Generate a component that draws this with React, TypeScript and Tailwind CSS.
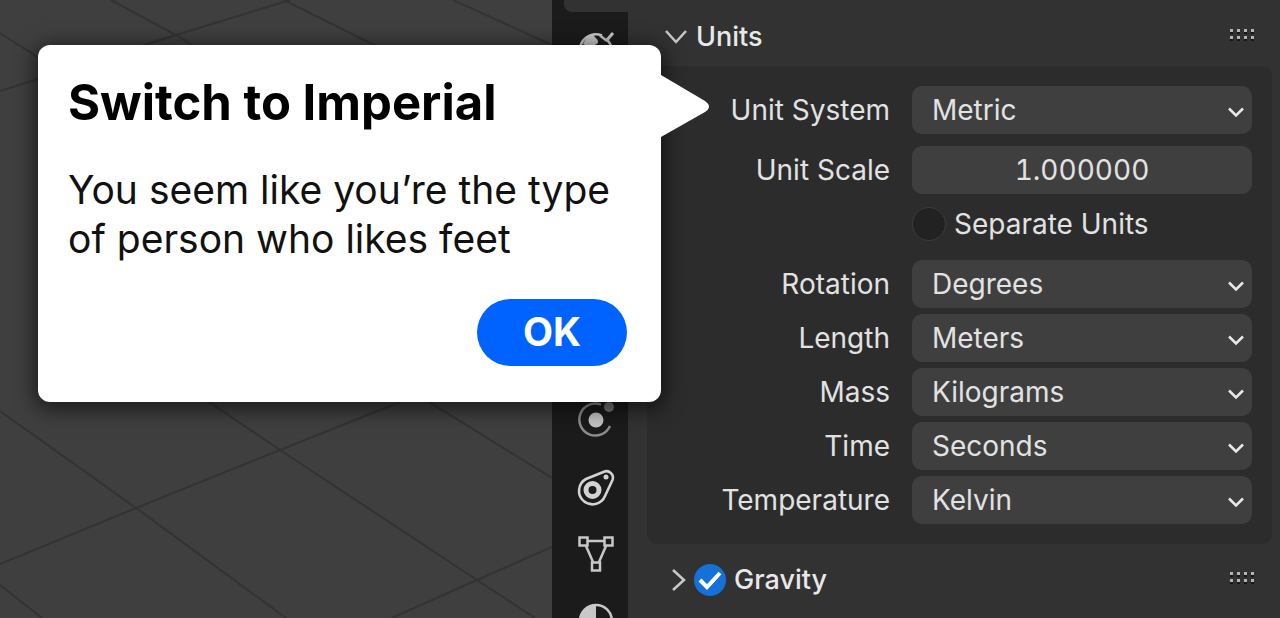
import { useState, type ReactNode } from "react";

function Grip() {
  return (
    <svg className="mb-1 h-3 w-6 shrink-0" viewBox="0 0 24 12" aria-hidden="true">
      {[0, 7, 14, 21].map((x) =>
        [0, 7].map((y) => (
          <g key={`${x}-${y}`}>
            <rect x={x} y={y + 2} width="3" height="3" fill="#161616" />
            <rect x={x} y={y} width="3" height="3" fill="#b4b4b4" />
          </g>
        )),
      )}
    </svg>
  );
}

function ViewportGrid() {
  return (
    <svg
      className="h-full w-full"
      viewBox="0 0 552 618"
      preserveAspectRatio="xMinYMin slice"
      fill="none"
      stroke="#333333"
      strokeWidth="2"
      aria-hidden="true"
    >
      <path d="M0 33L60 71M111 0L176 35L200 50M284 0L390 53M453 0L552 45M0 91L176 35L290 0" />
      <path d="M0 411L136 508L286 618M209 402L280 450L477 580L535 618M429 402L552 478" />
      <path d="M400 402L280 450L136 508L0 564M392 618L477 580L552 547M0 585L42 618" />
    </svg>
  );
}

function WorldIcon() {
  return (
    <svg className="size-10" viewBox="0 0 40 40" fill="none" aria-hidden="true">
      <path d="M4 26A16 16 0 0 1 26 9.500M30 13A16 16 0 0 1 36 26" stroke="#c8c8c8" strokeWidth="2.500" />
      <path d="M24 9.500L31 15" stroke="#c8c8c8" strokeWidth="2.500" />
      <path d="M31 14l6-7" stroke="#c8c8c8" strokeWidth="3" />
      <path d="M7 18C10 12 14 9 18 9c0 3 4 3 4 7 0 3-5 2-6 6-3 0-5-2-9-4z" fill="#c8c8c8" />
    </svg>
  );
}

function PhysicsIcon() {
  return (
    <svg className="size-10" viewBox="0 0 40 40" fill="none" aria-hidden="true">
      <path d="M25 3.600A16 16 0 1 0 34 25" stroke="#8c8c8c" strokeWidth="2.500" />
      <circle cx="20" cy="19" r="7.500" fill="#c4c4c4" />
      <circle cx="33" cy="6" r="5" fill="#777777" />
    </svg>
  );
}

function ConstraintIcon() {
  return (
    <svg className="size-10" viewBox="0 0 40 40" fill="none" stroke="#d2d2d2" aria-hidden="true">
      <path
        d="M10 11L28 3.700A6.500 6.500 0 0 1 36.500 12L29 28A13.500 13.500 0 1 1 10 11z"
        strokeWidth="2.600"
        strokeLinejoin="round"
      />
      <circle cx="16.500" cy="22" r="6.500" strokeWidth="5" />
      <circle cx="30" cy="9" r="2.500" fill="#d2d2d2" stroke="none" />
    </svg>
  );
}

function DataIcon() {
  return (
    <svg className="size-10" viewBox="0 0 40 40" fill="none" stroke="#c8c8c8" strokeWidth="2.500" aria-hidden="true">
      <path d="M12 6H28M10 11L17 27M30 11L23 27" />
      <rect x="3.500" y="2.500" width="8" height="8" />
      <rect x="28.500" y="2.500" width="8" height="8" />
      <rect x="16" y="27.500" width="8" height="8" />
    </svg>
  );
}

function MaterialIcon() {
  return (
    <svg className="size-10" viewBox="0 0 40 40" fill="none" aria-hidden="true">
      <circle cx="20" cy="19" r="16" stroke="#c8c8c8" strokeWidth="2.500" />
      <path d="M20 3a16 16 0 0 0 0 32z" fill="#c8c8c8" />
    </svg>
  );
}

function Tab({ label, children }: { label: string; children: ReactNode }) {
  return (
    <button type="button" aria-label={label} className="flex h-[67px] w-full shrink-0 items-center justify-center pl-3">
      {children}
    </button>
  );
}

const rowClass = "grid h-12 grid-cols-[243fr_340fr] items-center gap-x-[22px]";
const fieldClass =
  "h-12 w-full appearance-none rounded-[10px] bg-[#3f3f3f] text-[28px] text-[#e2e2e2] outline-none";

function SelectRow({ id, label, options }: { id: string; label: string; options: string[] }) {
  return (
    <div className={rowClass}>
      <label htmlFor={id} className="text-right whitespace-nowrap">
        {label}
      </label>
      <div className="relative">
        <select id={id} className={`${fieldClass} px-5`}>
          {options.map((o) => (
            <option key={o}>{o}</option>
          ))}
        </select>
        <svg
          className="pointer-events-none absolute top-5 right-2 h-3 w-4"
          viewBox="0 0 16 12"
          fill="none"
          stroke="#e8e8e8"
          strokeWidth="2.500"
          aria-hidden="true"
        >
          <path d="M1 2.500L8 9.500L15 2.500" />
        </svg>
      </div>
    </div>
  );
}

export default function App() {
  const [scale, setScale] = useState("1.000000");
  const [open, setOpen] = useState(true);

  return (
    <div className="relative flex h-screen overflow-hidden bg-[#323232] font-['Inter',sans-serif] text-[28px] text-[#e2e2e2]">
      <main className="min-w-0 flex-[552] bg-[#3f3f3f]">
        <ViewportGrid />
      </main>

      <nav className="flex w-[76px] shrink-0 flex-col overflow-hidden bg-[#1b1b1b]" aria-label="Properties tabs">
        <div className="ml-3 h-3 shrink-0 rounded-bl-lg bg-[#323232]" />
        <Tab label="World">
          <WorldIcon />
        </Tab>
        <div className="h-[308px] shrink-0" />
        <Tab label="Physics">
          <PhysicsIcon />
        </Tab>
        <Tab label="Constraints">
          <ConstraintIcon />
        </Tab>
        <Tab label="Data">
          <DataIcon />
        </Tab>
        <Tab label="Material">
          <MaterialIcon />
        </Tab>
      </nav>

      <aside className="flex min-w-0 flex-[652] flex-col">
        <header className="flex h-[66px] shrink-0 items-center justify-between pt-2 pr-[26px] pl-9">
          <button type="button" className="flex items-center gap-2 text-[27px] font-medium text-[#e8e8e8]">
            <svg className="h-4 w-6" viewBox="0 0 24 16" fill="none" stroke="#c8c8c8" strokeWidth="2.500" aria-hidden="true">
              <path d="M2 2L12 13L22 2" />
            </svg>
            Units
          </button>
          <Grip />
        </header>

        <section className="mr-2 ml-[19px] rounded-[10px] bg-[#2c2c2c] py-5 pr-5">
          <div className="flex flex-col gap-3">
            <SelectRow id="system" label="Unit System" options={["Metric", "Imperial", "None"]} />
            <div className="flex flex-col gap-[6px]">
              <div className={rowClass}>
                <label htmlFor="scale" className="text-right whitespace-nowrap">
                  Unit Scale
                </label>
                <input
                  id="scale"
                  value={scale}
                  onChange={(e) => setScale(e.target.value)}
                  className={`${fieldClass} text-center tabular-nums`}
                />
              </div>
              <div className={rowClass}>
                <label className="col-start-2 flex items-center gap-2 whitespace-nowrap">
                  <input
                    type="checkbox"
                    className="size-[34px] shrink-0 appearance-none rounded-full border border-[#3c3c3c] bg-[#222222] checked:bg-[#1570d8]"
                  />
                  Separate Units
                </label>
              </div>
            </div>
            <div className="flex flex-col gap-[6px]">
              <SelectRow id="rotation" label="Rotation" options={["Degrees", "Radians"]} />
              <SelectRow id="length" label="Length" options={["Meters", "Kilometers", "Centimeters"]} />
              <SelectRow id="mass" label="Mass" options={["Kilograms", "Grams", "Tonnes"]} />
              <SelectRow id="time" label="Time" options={["Seconds", "Minutes", "Hours"]} />
              <SelectRow id="temperature" label="Temperature" options={["Kelvin", "Celsius"]} />
            </div>
          </div>
        </section>

        <header className="flex h-[72px] shrink-0 items-center justify-between pr-[26px] pl-[42px]">
          <div className="flex items-center gap-2">
            <button type="button" aria-label="Expand Gravity">
              <svg className="h-6 w-4" viewBox="0 0 16 24" fill="none" stroke="#c8c8c8" strokeWidth="2.500" aria-hidden="true">
                <path d="M3 2L14 12L3 22" />
              </svg>
            </button>
            <label className="flex items-center gap-2 text-[27px] font-medium text-[#e8e8e8]">
              <span className="relative flex">
                <input
                  type="checkbox"
                  defaultChecked
                  className="peer size-8 appearance-none rounded-full bg-[#222222] checked:bg-[#1570d8]"
                />
                <svg
                  className="pointer-events-none absolute inset-0 hidden size-8 peer-checked:block"
                  viewBox="0 0 32 32"
                  fill="none"
                  stroke="#ffffff"
                  strokeWidth="4"
                  aria-hidden="true"
                >
                  <path d="M6 16L13 23L26 9" />
                </svg>
              </span>
              Gravity
            </label>
          </div>
          <Grip />
        </header>
      </aside>

      {open && (
        <div
          role="dialog"
          aria-labelledby="tip-title"
          className="absolute top-[45px] left-[38px] w-[623px] rounded-xl bg-white px-[30px] pt-7 pb-9 text-black shadow-[0_4px_20px_4px_rgba(0,0,0,0.55)]"
        >
          <h1 id="tip-title" className="text-[49px] leading-[60px] font-bold whitespace-nowrap">
            Switch to Imperial
          </h1>
          <p className="mt-8 text-[39px] leading-[49px] text-[#111111]">
            You seem like you’re the type
            <br />
            of person who likes feet
          </p>
          <div className="mt-9 flex justify-end pr-1">
            <button
              type="button"
              onClick={() => setOpen(false)}
              className="h-[67px] w-[150px] rounded-full bg-[#0062ff] text-[39px] font-bold text-white"
            >
              OK
            </button>
          </div>
          <svg className="absolute top-[30px] left-full h-[62px] w-12" viewBox="0 0 48 62" fill="#ffffff" aria-hidden="true">
            <path d="M-1 0L0 0L44 26Q52 31.500 44 37L0 62L-1 62z" />
          </svg>
        </div>
      )}
    </div>
  );
}
